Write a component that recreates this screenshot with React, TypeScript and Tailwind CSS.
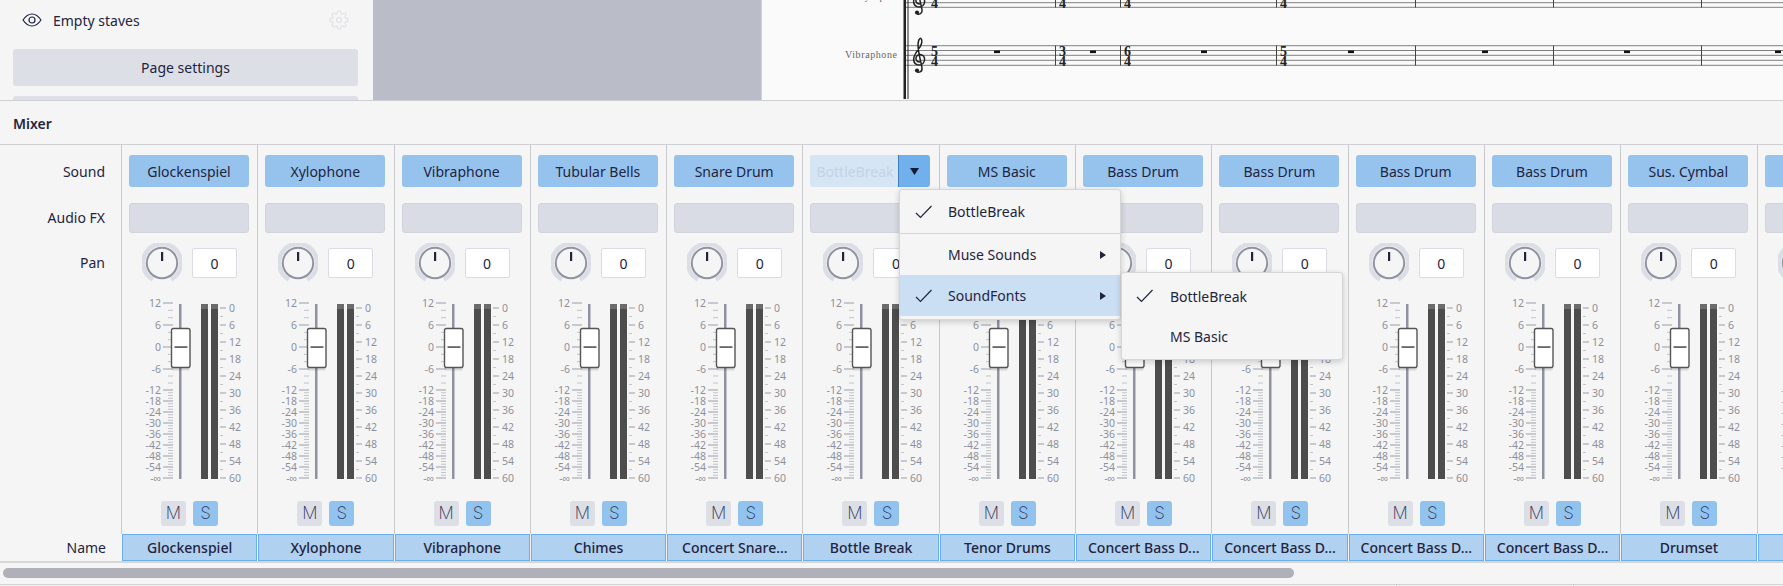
const FONT = "font-['Noto_Sans',sans-serif]";

const CHANNELS = [
  { sound: "Glockenspiel", name: "Glockenspiel" },
  { sound: "Xylophone", name: "Xylophone" },
  { sound: "Vibraphone", name: "Vibraphone" },
  { sound: "Tubular Bells", name: "Chimes" },
  { sound: "Snare Drum", name: "Concert Snare..." },
  { sound: "BottleBreak", name: "Bottle Break", open: true },
  { sound: "MS Basic", name: "Tenor Drums" },
  { sound: "Bass Drum", name: "Concert Bass D..." },
  { sound: "Bass Drum", name: "Concert Bass D..." },
  { sound: "Bass Drum", name: "Concert Bass D..." },
  { sound: "Bass Drum", name: "Concert Bass D..." },
  { sound: "Sus. Cymbal", name: "Drumset" },
  { sound: "", name: "" },
];

const LEFT_SCALE = [
  { label: "12", y: 8 },
  { label: "6", y: 30 },
  { label: "0", y: 52 },
  { label: "-6", y: 74 },
  { label: "-12", y: 95 },
  { label: "-18", y: 106 },
  { label: "-24", y: 117 },
  { label: "-30", y: 128 },
  { label: "-36", y: 139 },
  { label: "-42", y: 150 },
  { label: "-48", y: 161 },
  { label: "-54", y: 172 },
  { label: "-∞", y: 183 },
];
const RIGHT_SCALE = ["0", "6", "12", "18", "24", "30", "36", "42", "48", "54", "60"];

function Fader() {
  const minor: number[] = [];
  LEFT_SCALE.slice(0, -1).forEach((m, i) => {
    const gap = LEFT_SCALE[i + 1].y - m.y;
    const n = i < 4 ? 2 : 3;
    for (let k = 1; k <= n; k++) minor.push(m.y + (gap * k) / (n + 1));
  });
  return (
    <svg width="125" height="195" viewBox="0 0 125 195" className="block">
      {LEFT_SCALE.map((m) => (
        <g key={m.label}>
          <text x="39" y={m.y + 3.8} textAnchor="end" className="fill-[#8d909c] text-[10.5px]">
            {m.label}
          </text>
          <rect x="41" y={m.y - 0.5} width="10" height="1" fill="#9a9da8" />
        </g>
      ))}
      {minor.map((y) => (
        <rect key={y} x="46" y={y - 0.5} width="5" height="1" fill="#c2c4cc" />
      ))}
      <rect x="57" y="9" width="2.5" height="175" fill="#8f92a2" />
      <rect x="79" y="9" width="7" height="175" fill="#4d4d4d" />
      <rect x="79" y="9" width="7" height="5" fill="#6b6b6b" />
      <rect x="89" y="9" width="7" height="175" fill="#4d4d4d" />
      <rect x="89" y="9" width="7" height="5" fill="#6b6b6b" />
      {RIGHT_SCALE.map((l, i) => {
        const y = 13 + i * 17;
        return (
          <g key={l}>
            <rect x="98" y={y - 0.5} width="6" height="1" fill="#9a9da8" />
            {i < 10 && <rect x="98" y={y + 8} width="3" height="1" fill="#c2c4cc" />}
            <text x="107" y={y + 4} className="fill-[#8d909c] text-[10.5px]">
              {l}
            </text>
          </g>
        );
      })}
      <rect x="49.5" y="34.5" width="18.5" height="39" rx="2" fill="#000" opacity="0.12" transform="translate(0 2)" />
      <rect x="49.5" y="33.5" width="18.5" height="39" rx="2" fill="#fff" stroke="#555" strokeWidth="1.4" />
      <rect x="52.5" y="51.2" width="13" height="1.8" fill="#666" />
    </svg>
  );
}

function Knob() {
  return (
    <svg width="40" height="40" viewBox="0 0 40 40" className="block">
      <path d="M11 36.5 A19 19 0 1 1 29 36.5" fill="none" stroke="#dcdee5" strokeWidth="4.5" />
      <circle cx="20" cy="20" r="15.2" fill="#f5f5f5" stroke="#8f92a0" strokeWidth="2" />
      <rect x="19" y="9" width="2.2" height="9" fill="#1f2440" />
    </svg>
  );
}

function Check() {
  return (
    <svg width="18" height="14" viewBox="0 0 18 14" className="block">
      <path d="M1 8 L5.5 12.5 L16.5 1" fill="none" stroke="#1f2440" strokeWidth="1.2" />
    </svg>
  );
}

function MenuArrow() {
  return (
    <svg width="6" height="8" viewBox="0 0 6 8" className="block">
      <path d="M0 0 L6 4 L0 8 Z" fill="#1f2440" />
    </svg>
  );
}

function SoundMenu() {
  return (
    <div className="absolute left-[899px] top-[44px] z-10 w-[222px] h-[131px] bg-[#f5f5f5] border border-[#d6d6d6] rounded-[3px] shadow-[0_2px_6px_rgba(0,0,0,0.18)] text-[14px] text-[#1f2440]">
      <div className="flex items-center h-[44px] pl-[15px] border-b border-[#d4d4d4]">
        <Check />
        <span className="ml-[15px]">BottleBreak</span>
      </div>
      <div className="flex items-center justify-between h-[41px] pl-[48px] pr-[14px]">
        <span>Muse Sounds</span>
        <MenuArrow />
      </div>
      <div className="flex items-center justify-between h-[41px] pl-[15px] pr-[14px] bg-[#cadff4]">
        <div className="flex items-center">
          <Check />
          <span className="ml-[15px]">SoundFonts</span>
        </div>
        <MenuArrow />
      </div>
      <div className="absolute left-[221px] top-[82px] w-[222px] h-[88px] bg-[#f5f5f5] border border-[#d6d6d6] rounded-[3px] shadow-[0_2px_6px_rgba(0,0,0,0.18)]">
        <div className="flex items-center h-[46px] pl-[14px]">
          <Check />
          <span className="ml-[16px]">BottleBreak</span>
        </div>
        <div className="flex items-center h-[34px] pl-[48px]">MS Basic</div>
      </div>
    </div>
  );
}

function Strip({ sound, open }: { sound: string; open?: boolean }) {
  return (
    <div className="w-[136.3px] shrink-0 border-r border-[#c9cbcd] pl-[7px] pt-[10px] h-[389px]">
      {open ? (
        <div className="flex w-[120px] h-[32px] rounded-[3px] overflow-hidden">
          <div className="w-[88px] flex items-center pl-[6px] bg-[#d6e5f4] text-[#c3d3e4] text-[14px]">{sound}</div>
          <div className="flex-1 flex items-center justify-center bg-[#70b0ed] border-l border-[#3f7fc0]">
            <svg width="9" height="7" viewBox="0 0 9 7">
              <path d="M0 0 H9 L4.5 7 Z" fill="#161a33" />
            </svg>
          </div>
        </div>
      ) : (
        <div className="w-[120px] h-[32px] rounded-[3px] bg-[#95c3ee] flex items-center justify-center text-[14px] text-[#1f2440]">
          {sound}
        </div>
      )}
      <div className="w-[120px] h-[30px] mt-[16px] rounded-[3px] bg-[#d9dce4] border border-[#d1d4db]" />
      <div className="flex items-center h-[40px] mt-[10px] pl-[13px]">
        <Knob />
        <div className="w-[45px] h-[30px] ml-[10px] bg-white border border-[#d9dce4] rounded-[2px] flex items-center justify-center text-[14px] text-[#1f2440]">
          0
        </div>
      </div>
      <div className="mt-[12px] -ml-[7px]">
        <Fader />
      </div>
      <div className="flex mt-[11px] ml-[32px] gap-[7px]">
        <div className="w-[25px] h-[25px] rounded-[3px] bg-[#dcdfe6] flex items-center justify-center font-['Inter',sans-serif] font-extralight text-[17px] text-[#2a3157]">
          M
        </div>
        <div className="w-[25px] h-[25px] rounded-[3px] bg-[#92c3ee] flex items-center justify-center font-['Inter',sans-serif] font-extralight text-[17px] text-[#2a3157]">
          S
        </div>
      </div>
    </div>
  );
}

function Clef({ dy }: { dy: number }) {
  return (
    <g transform={`translate(0 ${dy})`}>
      <path
        d="M919 62 C916 62 914.5 60 915 57.5 C915.5 55 918.5 54 921 55 C924 56 924.5 61 922 63.5 C919 66 914 65.5 912.8 61 C911.5 56 916 51 919 47 C921 44 921.5 40 920 38.5 C918.5 37.5 917 41 917 45 C917 52 920.5 64 921 68 C921.5 72 917 73.5 915.5 71"
        fill="none"
        stroke="#222"
        strokeWidth="1.5"
      />
      <circle cx="916" cy="70.5" r="2.1" fill="#222" />
    </g>
  );
}

const TIME_SIGS = [
  { x: 930, top: "5" },
  { x: 1058, top: "3" },
  { x: 1123, top: "6" },
  { x: 1279, top: "5" },
];
const BARS = [1054, 1119, 1275, 1414, 1552, 1700];
const RESTS = [996, 1092, 1203, 1350, 1484, 1626, 1777];
const STAFF_LINES = [45.7, 50.5, 55.3, 60.3, 65.3];

// drawn in page coordinates, the svg is shifted back by its left edge
function Score() {
  return (
    <svg width="1022" height="99" viewBox="761 0 1022 99" className="block">
      <text x="856" y="0" className="fill-[#666] text-[10px] font-['Liberation_Serif',serif] tracking-[0.6px]">
        Xylophone
      </text>
      <text x="844" y="58" className="fill-[#666] text-[10px] font-['Liberation_Serif',serif] tracking-[0.6px]">
        Vibraphone
      </text>
      {STAFF_LINES.map((y) => (
        <rect key={y} x="905" y={y - 0.5} width="878" height="1" fill="#808080" />
      ))}
      <rect x="905" y="2.2" width="878" height="1" fill="#808080" />
      <rect x="905" y="6.8" width="878" height="1" fill="#808080" />
      <rect x="902.5" y="0" width="2.5" height="99" fill="#222" />
      <rect x="906.5" y="0" width="1" height="99" fill="#222" />
      {BARS.map((x) => (
        <g key={x}>
          <rect x={x} y="0" width="1" height="7.5" fill="#444" />
          <rect x={x} y="45.5" width="1" height="20" fill="#444" />
        </g>
      ))}
      {RESTS.map((x) => (
        <rect key={x} x={x - 3} y="50.5" width="6" height="2.6" fill="#111" />
      ))}
      <Clef dy={0} />
      <Clef dy={-58} />
      {TIME_SIGS.map((t) => (
        <g key={t.x} className="fill-[#222] font-['Liberation_Serif',serif] font-bold text-[14px]">
          <text x={t.x} y="55.5">
            {t.top}
          </text>
          <text x={t.x} y="65.5">
            4
          </text>
          <text x={t.x} y="7.5">
            4
          </text>
        </g>
      ))}
    </svg>
  );
}

export default function App() {
  return (
    <div className={`${FONT} w-[1783px] h-[586px] overflow-hidden bg-[#f5f5f5] flex flex-col text-[#1f2440]`}>
      {/* top: properties panel, grey gap, score */}
      <div className="h-[100px] shrink-0 flex overflow-hidden">
        <div className="w-[373px] shrink-0 pl-[13px] pr-[15px]">
          <div className="flex items-center h-[40px]">
            <svg width="20" height="14" viewBox="0 0 20 14" className="ml-[9px]">
              <path d="M1 7 C4 2.5 7 1 10 1 C13 1 16 2.5 19 7 C16 11.5 13 13 10 13 C7 13 4 11.5 1 7 Z" fill="none" stroke="#1f2440" strokeWidth="1.2" />
              <circle cx="10" cy="7" r="3" fill="none" stroke="#1f2440" strokeWidth="1.2" />
            </svg>
            <span className="ml-[11px] text-[14px]">Empty staves</span>
            <svg width="20" height="20" viewBox="0 0 24 24" className="ml-auto mr-[9px]" fill="none" stroke="#dfe1e6" strokeWidth="1.4">
              <circle cx="12" cy="12" r="3" />
              <path d="M19.4 15a1.65 1.65 0 0 0 .33 1.82l.06.06a2 2 0 1 1-2.83 2.83l-.06-.06a1.65 1.65 0 0 0-2.82 1.17V21a2 2 0 1 1-4 0v-.09A1.65 1.65 0 0 0 7.3 19.7l-.06.06a2 2 0 1 1-2.83-2.83l.06-.06a1.65 1.65 0 0 0-1.17-2.82H3a2 2 0 1 1 0-4h.09A1.65 1.65 0 0 0 4.3 7.3l-.06-.06a2 2 0 1 1 2.83-2.83l.06.06A1.65 1.65 0 0 0 9.9 3.3V3a2 2 0 1 1 4 0v.09a1.65 1.65 0 0 0 2.82 1.17l.06-.06a2 2 0 1 1 2.83 2.83l-.06.06A1.65 1.65 0 0 0 21 9.9h.09a2 2 0 1 1 0 4H21a1.65 1.65 0 0 0-1.6 1.1z" />
            </svg>
          </div>
          <div className="mt-[9px] w-[345px] h-[37px] rounded-[3px] bg-[#dcdfe6] flex items-center justify-center text-[14px]">
            Page settings
          </div>
          <div className="mt-[10px] w-[345px] h-[8px] rounded-[3px] bg-[#dcdfe6]" />
        </div>
        <div className="w-[388px] shrink-0 bg-[#babdc7]" />
        <div className="flex-1 bg-[#fafafa] border-l border-[#cdd2dc]">
          <Score />
        </div>
      </div>

      {/* mixer */}
      <div className="h-[45px] shrink-0 border-y border-[#cfd0d3] flex items-center pl-[13px] pt-[2px] text-[14px] font-semibold">
        Mixer
      </div>
      <div className="relative flex h-[389px] shrink-0">
        <div className="w-[122px] shrink-0 border-r border-[#c9cbcd] pr-[16px] pt-[10px] text-right text-[14px]">
          <div className="h-[32px] leading-[33px]">Sound</div>
          <div className="h-[30px] mt-[16px] leading-[30px]">Audio FX</div>
          <div className="h-[30px] mt-[15px] leading-[30px]">Pan</div>
        </div>
        {CHANNELS.map((c, i) => (
          <Strip key={i} sound={c.sound} open={c.open} />
        ))}
        <SoundMenu />
      </div>
      <div className="flex h-[27px] shrink-0">
        <div className="w-[122px] shrink-0 pr-[16px] text-right text-[14px] leading-[28px]">Name</div>
        {CHANNELS.map((c, i) => (
          <div
            key={i}
            className="w-[135.3px] mr-[1px] shrink-0 border border-[#6cadec] bg-[#b1d1f0] flex items-center justify-center text-[14px] font-medium"
          >
            {c.name}
          </div>
        ))}
      </div>
      <div className="h-[2px] shrink-0 bg-[#d6d6d6]" />
      <div className="h-[21px] shrink-0 pt-[5px] pl-[3px]">
        <div className="w-[1291px] h-[10px] rounded-full bg-[#afb0b9]" />
      </div>
      <div className="flex-1 border-t border-[#d2d2d2] flex">
        <div className="w-[1397px] border-r border-[#d2d2d2]" />
        <div className="w-[177px] border-r border-[#d2d2d2]" />
      </div>
    </div>
  );
}
